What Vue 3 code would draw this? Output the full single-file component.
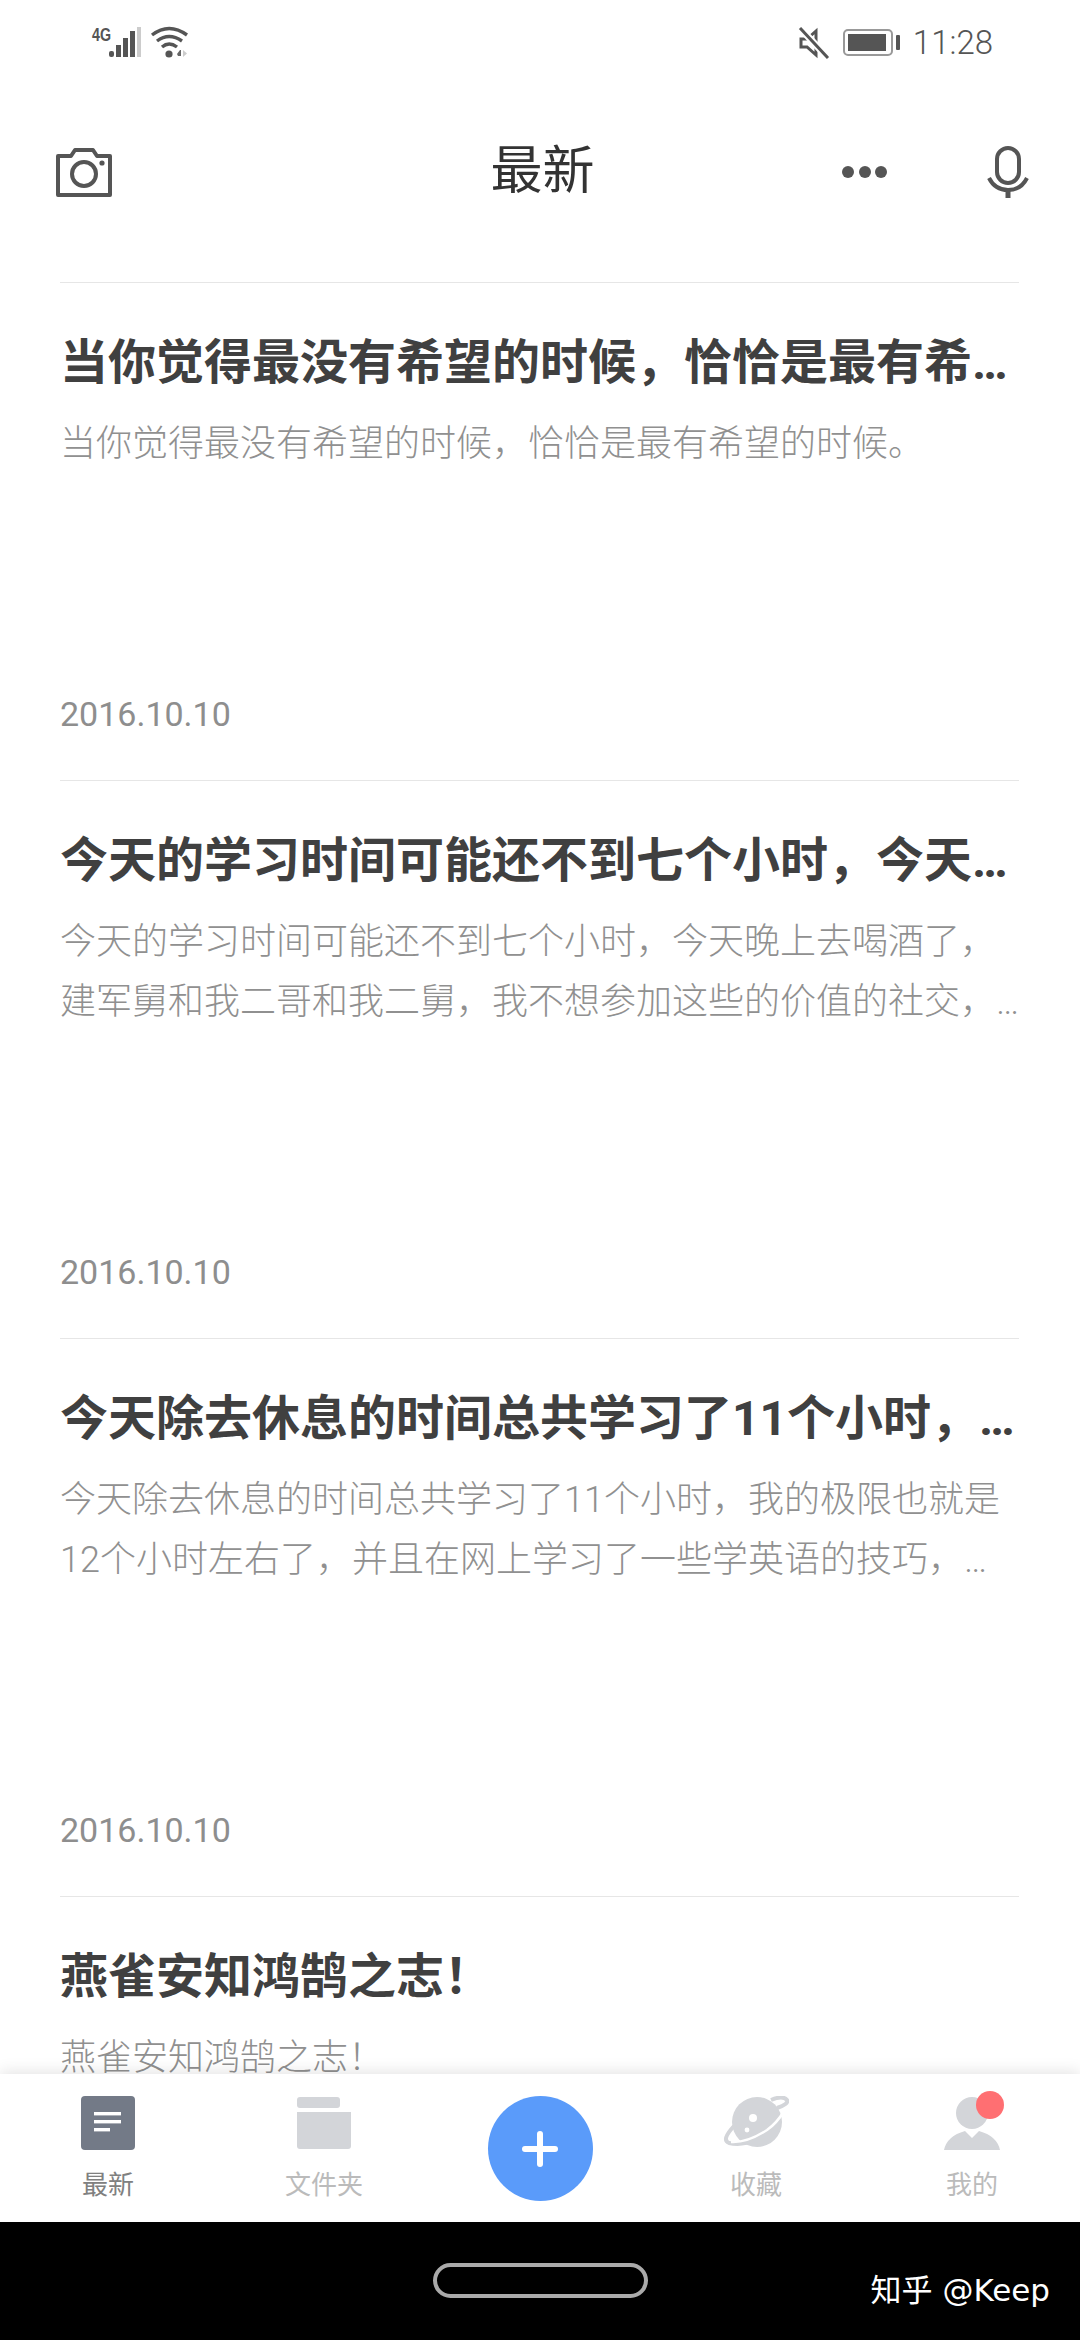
<script setup>
const notes = [
  {
    title: '当你觉得最没有希望的时候，恰恰是最有希…',
    lines: ['当你觉得最没有希望的时候，恰恰是最有希望的时候。'],
    date: '2016.10.10',
  },
  {
    title: '今天的学习时间可能还不到七个小时，今天…',
    lines: ['今天的学习时间可能还不到七个小时，今天晚上去喝酒了，', '建军舅和我二哥和我二舅，我不想参加这些的价值的社交，…'],
    date: '2016.10.10',
  },
  {
    title: '今天除去休息的时间总共学习了11个小时，…',
    lines: ['今天除去休息的时间总共学习了11个小时，我的极限也就是', '12个小时左右了，并且在网上学习了一些学英语的技巧，…'],
    date: '2016.10.10',
  },
  {
    title: '燕雀安知鸿鹄之志！',
    lines: ['燕雀安知鸿鹄之志！'],
  },
]
</script>

<template>
  <div class="page">
    <!-- 狀態列 -->
    <div class="status">
      <div class="status-left">
        <svg class="net-icons" width="96" height="32" viewBox="0 0 96 32">
          <text x="0" y="14" class="net" textLength="19" lengthAdjust="spacingAndGlyphs">4G</text>
          <rect x="17" y="24" width="5" height="6" rx="2" fill="#555" />
          <rect x="24" y="18" width="5" height="12" fill="#555" />
          <rect x="31" y="11" width="5" height="19" fill="#555" />
          <rect x="38" y="4" width="5" height="26" fill="#555" />
          <rect x="45" y="0" width="4" height="30" fill="#ccc" />
          <path d="M60 8 Q77 -5 95 8 M65 14 Q77 5 90 14 M70 20 Q77 14 85 20" fill="none" stroke="#555" stroke-width="3.4" />
          <circle cx="77" cy="27" r="3.6" fill="#555" />
          <path d="M86 29h3v-6h-1l-3 4z" fill="#666" />
          <path d="M91 23l4 3.5l-4 3.5z" fill="#ccc" />
        </svg>
      </div>
      <div class="status-right">
        <svg width="32" height="32" viewBox="0 0 32 32">
          <path d="M3 12h6l9-8v24l-9-8H3z" fill="none" stroke="#555" stroke-width="3" />
          <path d="M2 1l28 30" stroke="#fff" stroke-width="7" />
          <path d="M2 1l28 30" stroke="#555" stroke-width="3" />
        </svg>
        <div class="battery">
          <div class="battery-level"></div>
        </div>
        <div class="battery-cap"></div>
        <span class="time">11:28</span>
      </div>
    </div>

    <!-- 標題列 -->
    <div class="header">
      <svg class="camera" width="56" height="50" viewBox="0 0 56 50">
        <path d="M2 9h13l4-6h18l4 6h13v39H2z" fill="none" stroke="#555" stroke-width="4" stroke-linejoin="round" />
        <circle cx="28" cy="27" r="12" fill="none" stroke="#555" stroke-width="4" />
        <circle cx="46" cy="16" r="2.6" fill="#555" />
      </svg>
      <div class="header-title">最新</div>
      <div class="header-right">
        <div class="dots"><i></i><i></i><i></i></div>
        <svg width="42" height="52" viewBox="0 0 42 52">
          <rect x="10" y="2" width="22" height="35" rx="11" fill="none" stroke="#555" stroke-width="4" />
          <path d="M2 32 Q8 44 21 44 Q34 44 40 32" fill="none" stroke="#555" stroke-width="4" />
          <path d="M21 44v8" stroke="#555" stroke-width="5" />
        </svg>
      </div>
    </div>

    <!-- 筆記列表 -->
    <div class="list">
      <div v-for="(note, i) in notes" :key="i" class="note">
        <div class="note-title">{{ note.title }}</div>
        <div class="note-desc">
          <div v-for="line in note.lines" :key="line">{{ line }}</div>
        </div>
        <div v-if="note.date" class="note-date">{{ note.date }}</div>
      </div>
    </div>

    <!-- 底部分頁 -->
    <div class="tabs">
      <div class="tab">
        <svg width="54" height="54" viewBox="0 0 54 54">
          <rect width="54" height="54" rx="4" fill="#737a87" />
          <rect x="13" y="16" width="27" height="3.4" fill="#fff" />
          <rect x="13" y="24" width="27" height="3.4" fill="#fff" />
          <rect x="13" y="32" width="16" height="3.4" fill="#fff" />
        </svg>
        <span class="tab-label active">最新</span>
      </div>
      <div class="tab">
        <svg width="54" height="54" viewBox="0 0 54 54">
          <rect y="1" width="43" height="11" rx="3" fill="#d3d5d9" />
          <path d="M0 16h54v34a3 3 0 0 1-3 3H3a3 3 0 0 1-3-3z" fill="#d3d5d9" />
        </svg>
        <span class="tab-label">文件夹</span>
      </div>
      <div class="tab">
        <div class="fab"><span class="plus"></span></div>
      </div>
      <div class="tab">
        <svg width="66" height="54" viewBox="0 0 66 54">
          <path d="M11 30 Q-2 44 6 47 Q18 50 34 44 M54 12 Q66 8 64 4 Q60 -1 48 4" fill="none" stroke="#d3d5d9" stroke-width="4" />
          <circle cx="34" cy="26" r="25" fill="#d3d5d9" />
          <path d="M8 46 Q24 47 44 34 Q54 27 61 15" fill="none" stroke="#fff" stroke-width="2.5" />
          <circle cx="30" cy="22" r="4" fill="#fff" />
          <circle cx="24" cy="34" r="2.4" fill="#fff" />
        </svg>
        <span class="tab-label">收藏</span>
      </div>
      <div class="tab">
        <svg class="person" width="56" height="54" viewBox="0 0 56 54">
          <circle cx="28" cy="17" r="16" fill="#d3d5d9" />
          <path d="M0 54 Q3 40 21 35 L28 42 L35 35 Q53 40 56 54z" fill="#d3d5d9" />
          <circle cx="46" cy="9" r="14" fill="#ff6f72" />
        </svg>
        <span class="tab-label">我的</span>
      </div>
    </div>

    <!-- 系統導覽列 -->
    <div class="navbar">
      <div class="home-pill"></div>
      <span class="watermark">知乎 @Keep</span>
    </div>
  </div>
</template>

<style>
html, body { margin: 0; background: #fff; }
</style>

<style scoped>
.page {
  width: 1080px;
  height: 2340px;
  display: flex;
  flex-direction: column;
  overflow: hidden;
  background: #fff;
  font-family: Roboto, "Noto Sans CJK SC", sans-serif;
}

.status {
  height: 86px;
  flex: none;
  display: flex;
  justify-content: space-between;
  padding: 0 87px 0 92px;
  box-sizing: border-box;
}
.status-left { padding-top: 27px; height: 32px; }
.net-icons { overflow: visible; }
.status-right { display: flex; align-items: center; height: 86px; }
.status-right svg { margin-top: -1px; }
.net { font: bold 18px "Liberation Sans", sans-serif; fill: #555; }

.battery {
  width: 50px;
  height: 27px;
  margin-left: 13px;
  border: 2px solid #999;
  border-radius: 5px;
  box-sizing: border-box;
  padding: 3px;
  margin-top: -1px;
}
.battery-level { width: 38px; height: 100%; background: #555; }
.battery-cap { width: 4px; height: 15px; margin-left: 3px; background: #555; border-radius: 1px; margin-top: -1px; }
.time {
  margin-left: 13px;
  font-size: 33px;
  font-weight: 300;
  color: #555;
  margin-top: -1px;
}

.header {
  height: 172px;
  flex: none;
  display: grid;
  grid-template-columns: 1fr auto 1fr;
  align-items: center;
  padding: 0 51px 0 56px;
  box-sizing: border-box;
}
.header-title { font-size: 52px; color: #333; line-height: 60px; }
.header-right { display: flex; justify-content: flex-end; align-items: center; gap: 100px; }
.camera { margin-top: -1px; }
.dots { display: flex; gap: 4.5px; }
.dots i { display: block; width: 12px; height: 12px; border-radius: 50%; background: #555; }

.list {
  flex: 1;
  min-height: 0;
  overflow: hidden;
  padding: 24px 61px 0 60px;
}
.note {
  border-top: 1px solid #e6e6e6;
  padding: 50px 0 42px;
}
.note-title {
  font-size: 48px;
  line-height: 60px;
  font-weight: 700;
  color: #404040;
  white-space: nowrap;
}
.note-desc {
  margin-top: 21px;
  font-size: 36px;
  line-height: 60px;
  font-weight: 300;
  color: #909090;
  white-space: nowrap;
}
.note-date {
  margin-top: 216px;
  font-size: 34px;
  line-height: 48px;
  color: #8e8e8e;
}

.tabs {
  height: 148px;
  flex: none;
  display: grid;
  grid-template-columns: repeat(5, 216px);
  background: #fff;
  position: relative;
  box-shadow: 0 -3px 14px rgba(0, 0, 0, 0.1);
}
.tab {
  display: flex;
  flex-direction: column;
  align-items: center;
  padding-top: 22px;
}
.tab svg { display: block; }
.tab .person { overflow: visible; }
.tab-label {
  margin-top: 17px;
  font-size: 26px;
  line-height: 36px;
  color: #bbb;
}
.tab-label.active { color: #808080; }

.fab {
  width: 105px;
  height: 105px;
  border-radius: 50%;
  background: #5a9bfa;
  display: flex;
  align-items: center;
  justify-content: center;
}
.plus { display: block; width: 36px; height: 36px; position: relative; }
.plus::before, .plus::after {
  content: "";
  position: absolute;
  background: #fff;
  border-radius: 3px;
}
.plus::before { left: 0; right: 0; top: 15px; height: 6px; }
.plus::after { top: 0; bottom: 0; left: 15px; width: 6px; }

.navbar {
  height: 118px;
  flex: none;
  background: #000;
  display: grid;
  grid-template-columns: 1fr 215px 1fr;
  padding-top: 41px;
  box-sizing: border-box;
}
.home-pill {
  grid-column: 2;
  height: 35px;
  border: 4px solid #aaa;
  border-radius: 18px;
  box-sizing: border-box;
}
.watermark {
  grid-column: 3;
  justify-self: end;
  margin-right: 30px;
  font-family: "DejaVu Sans", "Noto Sans CJK SC", sans-serif;
  font-size: 31px;
  line-height: 44px;
  margin-top: 5px;
  color: #fff;
}
</style>
